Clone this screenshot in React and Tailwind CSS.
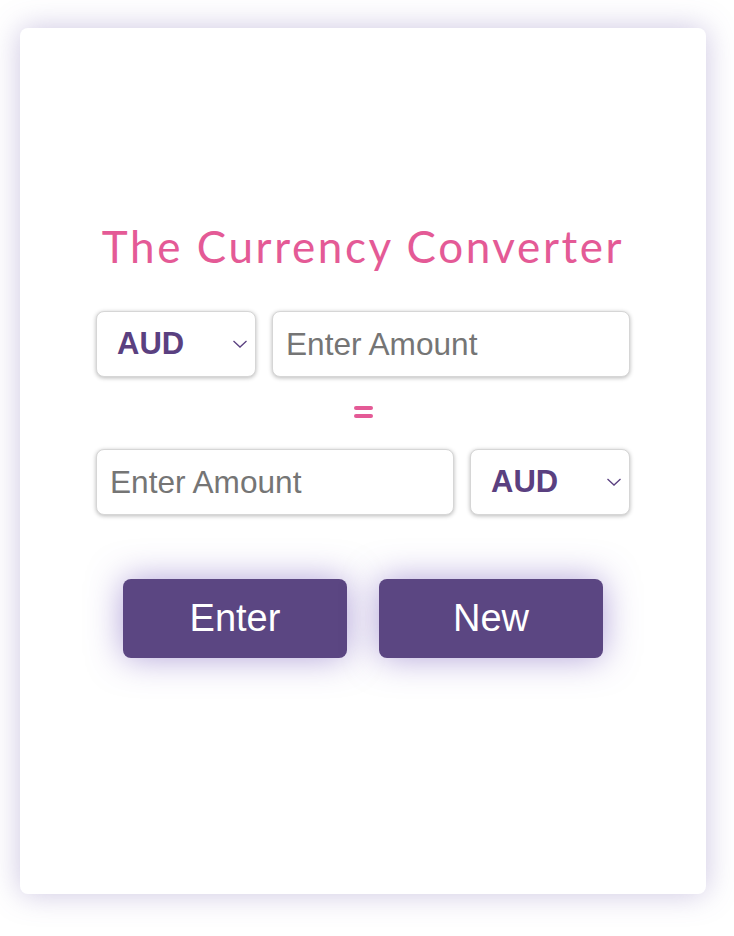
import { useState } from "react";

const currencies = ["AUD", "USD", "EUR", "GBP", "JPY", "CAD"];

const Chevron = () => (
  <svg
    className="pointer-events-none absolute right-[8px] top-1/2 -translate-y-1/2"
    width="16"
    height="10"
    viewBox="0 0 16 10"
    fill="none"
  >
    <path d="M1.5 2 L8 8 L14.5 2" stroke="#5a4080" strokeWidth="1.3" />
  </svg>
);

const CurrencySelect = ({ value, onChange }) => (
  <div className="relative w-[160px] h-[66px]">
    <select
      value={value}
      onChange={(e) => onChange(e.target.value)}
      className="appearance-none w-full h-full bg-white rounded-[8px] border border-[#d6d6d6] shadow-[0_1px_4px_rgba(0,0,0,0.28)] pl-[20px] text-[31px] font-bold text-[#5a4080] outline-none"
    >
      {currencies.map((c) => (
        <option key={c} value={c}>
          {c}
        </option>
      ))}
    </select>
    <Chevron />
  </div>
);

const AmountInput = ({ value, onChange }) => (
  <input
    type="text"
    value={value}
    onChange={(e) => onChange(e.target.value)}
    placeholder="Enter Amount"
    className="w-[358px] h-[66px] bg-white rounded-[8px] border border-[#d6d6d6] shadow-[0_1px_4px_rgba(0,0,0,0.28)] pl-[13px] text-[31.6px] text-[#333] placeholder:text-[#757575] outline-none"
  />
);

export default function App() {
  const [from, setFrom] = useState("AUD");
  const [to, setTo] = useState("AUD");
  const [amount, setAmount] = useState("");
  const [result, setResult] = useState("");

  return (
    <div
      className="min-h-screen bg-white pt-[28px] pl-[20px]"
      style={{ fontFamily: "'Liberation Sans', Arial, sans-serif" }}
    >
      <div className="w-[686px] h-[866px] bg-white rounded-[8px] shadow-[0_0_30px_rgba(110,90,170,0.35)] flex flex-col items-center pt-[190px]">
        <h1
          className="text-[44px] text-[#e45a96] tracking-[2.6px] leading-[56px]"
          style={{ fontFamily: "Lato, 'Noto Sans', sans-serif" }}
        >
          The Currency Converter
        </h1>

        <div className="flex gap-[16px] mt-[37px]">
          <CurrencySelect value={from} onChange={setFrom} />
          <AmountInput value={amount} onChange={setAmount} />
        </div>

        <div className="flex flex-col gap-[4px] mt-[29px] mb-[31px]">
          <span className="block w-[19px] h-[4px] rounded-full bg-[#e45a96]" />
          <span className="block w-[19px] h-[4px] rounded-full bg-[#e45a96]" />
        </div>

        <div className="flex gap-[16px]">
          <AmountInput value={result} onChange={setResult} />
          <CurrencySelect value={to} onChange={setTo} />
        </div>

        <div className="flex gap-[32px] mt-[64px]">
          <button className="w-[224px] h-[79px] rounded-[8px] bg-[#5b4682] text-white text-[38px] shadow-[0_0_34px_rgba(100,70,180,0.5)]">
            Enter
          </button>
          <button
            onClick={() => {
              setAmount("");
              setResult("");
            }}
            className="w-[224px] h-[79px] rounded-[8px] bg-[#5b4682] text-white text-[38px] shadow-[0_0_34px_rgba(100,70,180,0.5)]"
          >
            New
          </button>
        </div>
      </div>
    </div>
  );
}
